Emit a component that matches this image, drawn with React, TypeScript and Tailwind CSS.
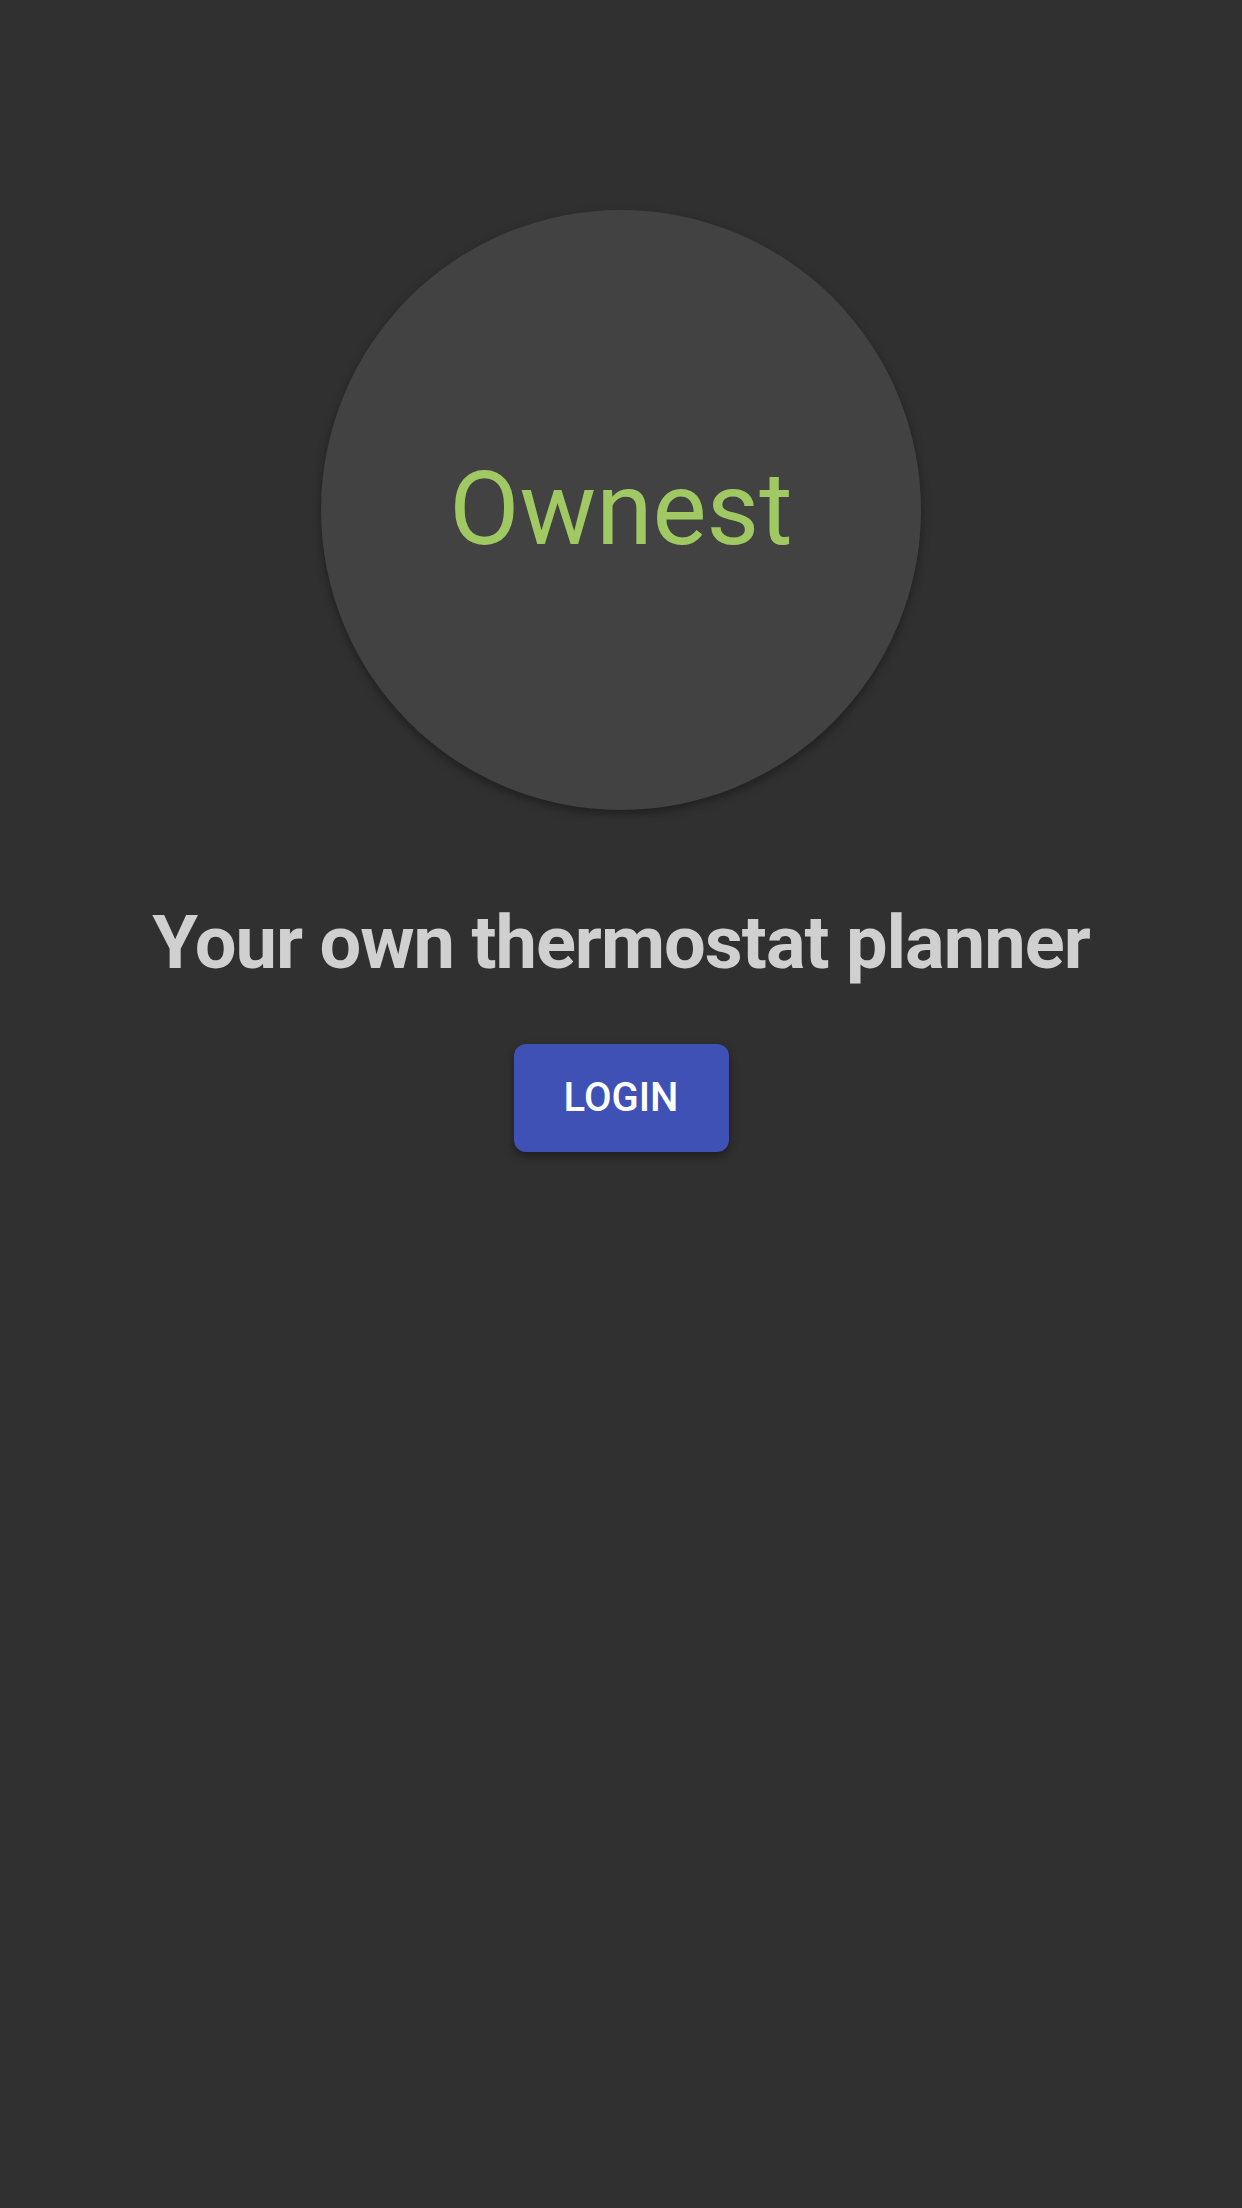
import React from 'react';

const App: React.FC = () => {
  return (
    <div className="min-h-[2208px] w-full bg-[#303030] flex flex-col items-center pt-[210px] font-['Roboto',sans-serif]">
      <div className="w-[600px] h-[600px] rounded-full bg-[#424242] shadow-[0_4px_10px_rgba(0,0,0,0.35)] flex items-center justify-center">
        <span className="text-[102px] leading-none text-[#a0c963] pb-[2px]">Ownest</span>
      </div>

      <h1 className="mt-[96px] text-[74px] leading-none font-bold text-[#d0d0d0] tracking-[-1px]">
        Your own thermostat planner
      </h1>

      <button className="mt-[64px] w-[215px] h-[108px] rounded-[12px] bg-[#3f51b5] text-white text-[40px] font-medium shadow-[0_4px_8px_rgba(0,0,0,0.4)]">
        LOGIN
      </button>
    </div>
  );
};

export default App;
